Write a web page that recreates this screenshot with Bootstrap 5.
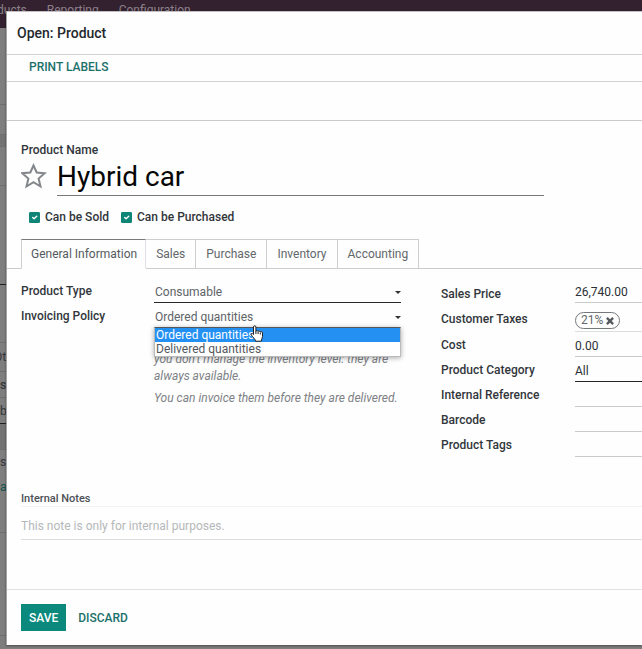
<!DOCTYPE html>
<html lang="en">
<head>
<meta charset="utf-8">
<meta name="viewport" content="width=device-width, initial-scale=1">
<title>Open: Product</title>
<link href="https://cdn.jsdelivr.net/npm/bootstrap@5.3.0/dist/css/bootstrap.min.css" rel="stylesheet">
<style>
  body { font-family: Roboto, "Liberation Sans", sans-serif; font-size: 12px; line-height: 16px; color: #32363c; background: #7b7b7b; }
  label, .fw-md { font-weight: 500; }

  /* dimmed page behind the dialog */
  .page-behind { background: #7e7e7e; color: #33363a; }
  .top-menu { height: 28px; flex: none; background: #33212f; padding-top: 2px; gap: 20px; }
  .top-menu a { color: #8b8089; text-decoration: none; }
  .top-menu a:first-child { margin-left: -3px; }
  .strip { flex: none; width: 100%; border-bottom: 1px solid #6f6f6f; display: flex; align-items: center; }
  .strip-dark { border-bottom-color: #1f1f1f; }
  .strip-band { background: #737373; }
  .strip-plain { border-bottom-color: transparent; }
  .strip a { color: #14524c; text-decoration: none; }
  .strip .cut { margin-left: -6px; }

  /* dialog */
  .dialog { margin: 11px 0 4px 6px; background: #fdfefd; border-left: 1px solid #a5a5a5; border-top: 1px solid #c5bfc4; box-shadow: 0 1px 2px #0006; }
  .dialog-title { font-size: 14px; line-height: 20px; padding: 11px 10px; border-bottom: 1px solid #d0d2d1; color: #24282e; }
  .bar-actions { padding: 4px 15px 6px; border-bottom: 1px solid #d0d2d1; }
  .bar-empty { height: 39px; border-bottom: 1px solid #c9cac9; }
  .btn-flat { font-size: 12px; line-height: 16px; padding: 0 7px; border: 0; border-radius: 0; font-weight: 500; color: #1b706b; }
  .sheet { padding: 21px 0 0 14px; }

  .line-input { display: block; width: 100%; padding: 0; border: 0; border-bottom: 1px solid #c9cbca; border-radius: 0; background: transparent; color: #2b2f34; outline: 0; height: 21px; font-size: 12px; line-height: 16px; }
  .name-row { gap: 10px; margin-right: 98px; }
  .name-input { font-size: 28px; line-height: 32px; height: 38px; border-bottom-color: #77797a; color: #060606; }
  .star-btn { padding: 0; border: 0; line-height: 0; }

  .checks { gap: 12px; padding: 13px 0 14px 8px; }
  .checks .form-check-input { width: 11px; height: 11px; margin: 0; border-radius: 1px; border-color: #0f8578; }
  .checks .form-check-input:checked { background-color: #0f8578; background-size: 9px 9px; }
  .checks label { margin-left: 5px; }

  .tab-strip { margin-left: -14px; padding-left: 14px; border-bottom: 1px solid #c9cbcc; --bs-nav-tabs-border-radius: 0; }
  .tab-strip .nav-link { font-size: 12px; line-height: 16px; padding: 6px 10px; border: 1px solid #ccced0; border-left: 0; color: #63676c; border-radius: 0; margin-bottom: -1px; }
  .tab-strip .nav-link.active { padding-left: 9px; padding-right: 8px; border-left: 1px solid #ccced0; border-top-color: #77797b; border-bottom-color: #fdfefd; background: #fdfefd; color: #565a60; }

  .fields { display: grid; grid-template-columns: minmax(0, 380fr) minmax(0, 201fr); column-gap: 40px; padding-top: 13px; }
  .field-row { display: grid; grid-template-columns: 133px minmax(0, 1fr); margin-bottom: 4px; }
  .field-row label { padding-top: 1px; white-space: nowrap; }
  .fields-right .field-row { grid-template-columns: 134px minmax(0, 1fr); }
  .fields-right .label-low { padding-top: 4px; }
  .line-select { padding-left: 1px; border-bottom-color: #25282b; color: #5f6368; appearance: none; background: transparent url("data:image/svg+xml,%3Csvg xmlns='http://www.w3.org/2000/svg' viewBox='0 0 6 3'%3E%3Cpath d='M0 0h6L3 3z' fill='%23333'/%3E%3C/svg%3E") no-repeat right 0 top 9px / 6px 3px; }
  .dark-line { border-bottom-color: #25282b; }

  .choices { top: 20px; left: 0; width: 100%; min-width: 0; padding: 0; border: 1px solid #b9bbbd; border-top-color: #55585b; border-radius: 0; background: #fff; box-shadow: 0 1px 5px #0005; font-size: 12px; }
  .choices .dropdown-item { padding: 0 1px; font-size: 12px; line-height: 14px; color: #54585e; }
  .choices .dropdown-item.active { background: #2490f2; color: #fff; }
  .hand { position: absolute; left: 96px; top: 18px; z-index: 1001; pointer-events: none; }
  .help { margin: 23px 0 0 133px; color: #7d8186; font-style: italic; line-height: 17px; }
  .help p { margin-bottom: 5px; }

  .tag-box { height: 25px; border-bottom: 1px solid #dcdedd; }
  .tag-pill { display: inline-flex; align-items: center; gap: 3px; height: 17px; margin-top: 5px; padding: 0 5px; border: 1px solid #74787a; border-radius: 9px; color: #63676a; line-height: 15px; }
  .tag-pill button { padding: 0; border: 0; background: none; line-height: 0; color: #55595c; }

  .notes { padding-top: 31px; }
  .notes label { display: block; font-size: 11px; line-height: 14px; border-bottom: 1px solid #f1f2f2; color: #4d5157; }
  .notes .line-input { height: 33px; padding-top: 5px; border-bottom-color: #dcdedd; }
  .notes .line-input::placeholder { color: #b5b8ba; }

  .dialog-foot { margin-top: 49px; padding: 14px; gap: 5px; border-top: 1px solid #e0e2e1; }
  .btn-save { font-size: 12px; line-height: 16px; padding: 5px 8px; border: 0; border-radius: 0; background: #0b897d; color: #fff; font-weight: 500; height: 27px; }
</style>
<script src="https://cdn.jsdelivr.net/npm/bootstrap@5.3.0/dist/js/bootstrap.bundle.min.js"></script>
</head>
<body class="position-relative overflow-x-hidden">

<div class="page-behind position-absolute top-0 start-0 w-100 h-100 overflow-hidden d-flex flex-column">
  <nav class="top-menu d-flex" aria-label="Main">
    <a href="#">ducts</a><a href="#">Reporting</a><a href="#">Configuration</a>
  </nav>
  <div class="strip" style="height:77px"></div>
  <div class="strip" style="height:30px"></div>
  <div class="strip strip-band" style="height:12px"></div>
  <div class="strip" style="height:39px"></div>
  <div class="strip strip-dark" style="height:99px"></div>
  <div class="strip" style="height:58px"></div>
  <div class="strip" style="height:29px"><span class="cut">Ot</span></div>
  <div class="strip fw-md" style="height:26px">se</div>
  <div class="strip strip-dark" style="height:26px">b</div>
  <div class="strip strip-band" style="height:26px"></div>
  <div class="strip strip-plain" style="height:24px">s</div>
  <div class="strip strip-plain" style="height:26px"><a href="#">a</a></div>
  <div class="strip" style="height:33px"></div>
  <div class="strip" style="height:103px"></div>
</div>

<main class="dialog position-relative" role="dialog" aria-labelledby="dialogTitle">
  <h1 class="dialog-title fw-md mb-0" id="dialogTitle">Open: Product</h1>
  <div class="bar-actions d-flex"><button type="button" class="btn btn-flat">PRINT LABELS</button></div>
  <div class="bar-empty"></div>

  <form class="sheet">
    <label for="pname" class="d-block">Product Name</label>
    <div class="name-row d-flex align-items-center">
      <button type="button" class="btn star-btn" aria-label="Favorite">
        <svg width="26" height="28" viewBox="0 0 26 28" fill="none" stroke="#83868b" stroke-width="2" stroke-linejoin="miter"><path d="M12.500 2.500l3.200 7 8 .7-6.100 5.300 1.900 8-7-4.300-7 4.300 1.900-8L1.300 10.200l8-.7z"/></svg>
      </button>
      <input id="pname" class="line-input name-input" value="Hybrid car">
    </div>

    <div class="checks d-flex">
      <div class="d-flex align-items-center"><input class="form-check-input" type="checkbox" id="sold" checked><label for="sold">Can be Sold</label></div>
      <div class="d-flex align-items-center"><input class="form-check-input" type="checkbox" id="purch" checked><label for="purch">Can be Purchased</label></div>
    </div>

    <ul class="nav nav-tabs tab-strip flex-nowrap">
      <li class="nav-item"><a class="nav-link active" href="#">General Information</a></li>
      <li class="nav-item"><a class="nav-link" href="#">Sales</a></li>
      <li class="nav-item"><a class="nav-link" href="#">Purchase</a></li>
      <li class="nav-item"><a class="nav-link" href="#">Inventory</a></li>
      <li class="nav-item"><a class="nav-link" href="#">Accounting</a></li>
    </ul>

    <div class="fields">
      <div>
        <div class="field-row">
          <label for="ptype">Product Type</label>
          <select id="ptype" class="line-input line-select"><option>Consumable</option></select>
        </div>
        <div class="field-row mb-0">
          <label for="policy">Invoicing Policy</label>
          <div class="position-relative">
            <select id="policy" class="line-input line-select"><option>Ordered quantities</option><option>Delivered quantities</option></select>
            <div class="dropdown-menu show choices">
              <button type="button" class="dropdown-item active">Ordered quantities</button>
              <button type="button" class="dropdown-item">Delivered quantities</button>
            </div>
            <svg class="hand" width="14" height="17" viewBox="0 0 14 17" fill="#fff" stroke="#222" stroke-width="1" stroke-linejoin="round"><path d="M3.500 9.500V2a1.200 1.200 0 0 1 2.400 0v4.200c.3-.8 2-.7 2.200.3.400-.7 2-.5 2.200.5.500-.6 2.200-.4 2.200 1v3.500c0 2-1.300 2.700-1.300 4.700H5.500c0-2-2.500-3.500-4.200-6.200-.8-1.300.6-2.300 2.200-.5z"/><path d="M5.900 6v3M8.100 7v2M10.300 7.500v2" fill="none"/></svg>
          </div>
        </div>
        <div class="help">
          <p>you don't manage the inventory level: they are always available.</p>
          <p>You can invoice them before they are delivered.</p>
        </div>
      </div>

      <div class="fields-right">
        <div class="field-row"><label class="label-low" for="price">Sales Price</label><input id="price" class="line-input" value="26,740.00"></div>
        <div class="field-row"><label class="label-low" for="taxremove">Customer Taxes</label>
          <div class="tag-box"><span class="tag-pill">21%<button type="button" id="taxremove" aria-label="Remove 21%"><svg width="8" height="8" viewBox="0 0 9 9" stroke="currentColor" stroke-width="2.600"><path d="M1 1l7 7M8 1L1 8"/></svg></button></span></div></div>
        <div class="field-row"><label for="cost">Cost</label><input id="cost" class="line-input" value="0.00"></div>
        <div class="field-row"><label for="categ">Product Category</label><input id="categ" class="line-input dark-line" value="All"></div>
        <div class="field-row"><label for="ref">Internal Reference</label><input id="ref" class="line-input"></div>
        <div class="field-row"><label for="barcode">Barcode</label><input id="barcode" class="line-input"></div>
        <div class="field-row"><label for="tags">Product Tags</label><input id="tags" class="line-input"></div>
      </div>
    </div>

    <div class="notes">
      <label for="notes">Internal Notes</label>
      <input id="notes" class="line-input" placeholder="This note is only for internal purposes.">
    </div>
  </form>

  <div class="dialog-foot d-flex align-items-center">
    <button type="button" class="btn btn-save">SAVE</button>
    <button type="button" class="btn btn-flat">DISCARD</button>
  </div>
</main>
</body>
</html>
